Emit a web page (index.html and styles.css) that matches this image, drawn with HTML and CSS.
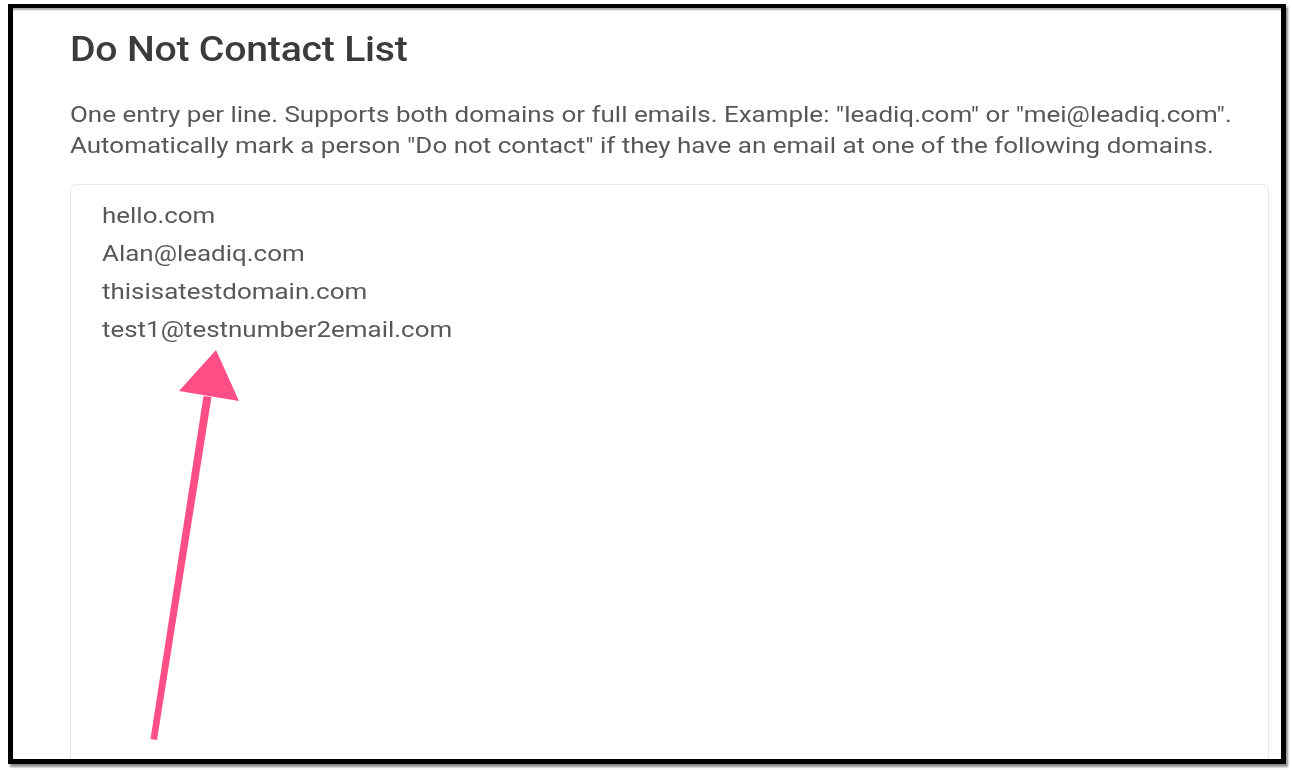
FILE: index.html
```html
<!DOCTYPE html>
<html lang="en">
<head>
<meta charset="utf-8">
<title>Do Not Contact List</title>
<link rel="stylesheet" href="styles.css">
</head>
<body>
<div class="frame">
  <h1 class="title"><span class="wide-title">Do Not Contact List</span></h1>
  <p class="desc"><span class="wide wide-desc">One entry per line. Supports both domains or full emails. Example: "leadiq.com" or "mei@leadiq.com".<br>Automatically mark a person "Do not contact" if they have an email at one of the following domains.</span></p>
  <div class="entries">
    <div class="entry"><span class="wide">hello.com</span></div>
    <div class="entry"><span class="wide">Alan@leadiq.com</span></div>
    <div class="entry"><span class="wide">thisisatestdomain.com</span></div>
    <div class="entry"><span class="wide">test1@testnumber2email.com</span></div>
  </div>
  <svg class="arrow" width="1292" height="770" viewBox="0 0 1292 770" xmlns="http://www.w3.org/2000/svg">
    <defs>
      <filter id="soft" x="-10%" y="-10%" width="120%" height="120%">
        <feGaussianBlur stdDeviation="0.6"/>
      </filter>
    </defs>
    <g filter="url(#soft)" fill="#fd4f86">
      <polygon points="203.5,396 211.5,397 157,740 150.5,739"/>
      <polygon points="216,350 179,391 239,401"/>
    </g>
  </svg>
</div>
</body>
</html>
```
FILE: styles.css
```css
html, body {
  margin: 0;
  padding: 0;
  background: #ffffff;
}

body {
  width: 1292px;
  height: 770px;
  overflow: hidden;
  padding: 4px 0 0 8px;
  box-sizing: border-box;
  font-family: Roboto, "Liberation Sans", Arial, sans-serif;
}

.frame {
  width: 1278px;
  height: 760px;
  box-sizing: border-box;
  border: 5px solid #000;
  border-top-width: 4.5px;
  background: #fff;
  box-shadow: inset 0 3px 2px -1px rgba(0, 0, 0, 0.35), 2px 3px 2px rgba(0, 0, 0, 0.45);
  padding: 21px 0 0 57px;
  overflow: hidden;
}

.title {
  margin: 0;
  font-size: 35px;
  line-height: 42px;
  font-weight: 500;
  color: #3b3b3b;
  letter-spacing: -0.2px;
}

.wide-title {
  display: inline-block;
  transform: scaleX(1.12);
  transform-origin: left center;
}

.wide {
  display: inline-block;
  transform: scaleX(1.206);
  transform-origin: left center;
  white-space: nowrap;
}

.wide-desc {
  transform: scaleX(1.208);
}

.desc {
  margin: 28px 0 0 0;
  font-size: 21.5px;
  line-height: 31px;
  color: #575757;
}

.entries {
  margin-top: 23px;
  margin-right: 12px;
  height: 700px;
  border: 1px solid #e8e8e8;
  border-radius: 6px;
  padding: 12px 0 0 31px;
  box-sizing: border-box;
  font-size: 21.5px;
  line-height: 38px;
  color: #585858;
}

.arrow {
  position: absolute;
  left: 0;
  top: 0;
  pointer-events: none;
}
```
